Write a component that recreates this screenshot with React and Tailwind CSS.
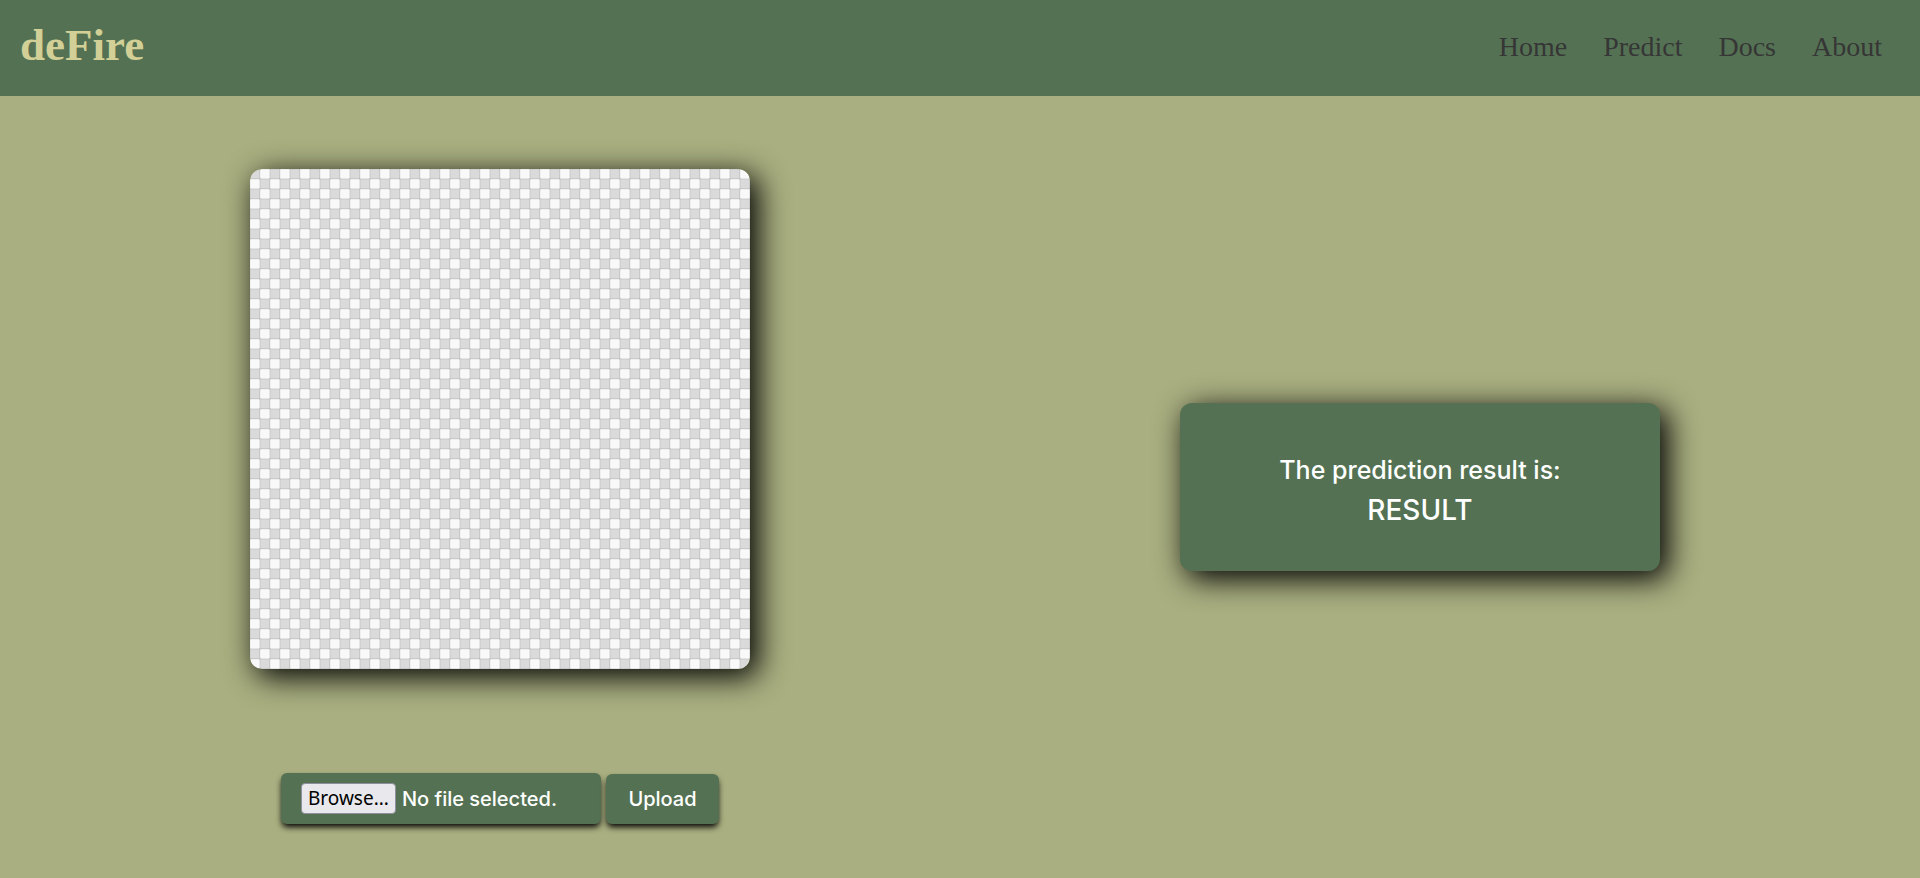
const links = ["Home", "Predict", "Docs", "About"];

function Checkerboard() {
  return (
    <svg
      role="img"
      aria-label="Image preview"
      viewBox="0 0 500 500"
      className="block aspect-square w-full max-w-[500px] rounded-[12px] shadow-[7px_7px_30px_1px_#000]"
    >
      <defs>
        <pattern id="checker" width="20" height="20" patternUnits="userSpaceOnUse">
          <rect width="20" height="20" fill="#dadada" />
          <rect x="10" width="10" height="10" rx="1" fill="#f9f9f9" />
          <rect y="10" width="10" height="10" rx="1" fill="#f9f9f9" />
          <path d="M0 9.5H20M0 19.5H20M9.5 0V20M19.5 0V20" stroke="#000" strokeOpacity="0.08" />
          <path d="M0 .5H20M0 10.5H20M.5 0V20M10.5 0V20" stroke="#000" strokeOpacity="0.04" />
        </pattern>
      </defs>
      <rect width="500" height="500" rx="12" fill="url(#checker)" />
    </svg>
  );
}

export default function App() {
  return (
    <div className="flex min-h-screen flex-col bg-[#a9af80] font-['Inter',sans-serif] font-medium text-white">
      <header className="flex h-24 items-center justify-between bg-[#547253] pr-[38px] pl-5 font-['Liberation_Serif',serif]">
        <a href="#home" className="pb-[6px] text-[45px] leading-[48px] font-bold text-[#d2d096]">
          deFire
        </a>
        <nav className="flex gap-9 pb-[3px] text-[28px] leading-9 font-normal text-[#363636]">
          {links.map((name) => (
            <a key={name} href={`#${name.toLowerCase()}`}>
              {name}
            </a>
          ))}
        </nav>
      </header>

      <main className="grid flex-1 grid-cols-2 px-10">
        <form className="flex flex-col items-center pt-[73px]" onSubmit={(e) => e.preventDefault()}>
          <Checkerboard />
          <div className="mt-26 flex items-end gap-[5px] text-[20px] leading-[30px]">
            <label
              htmlFor="image-file"
              className="flex w-80 items-center gap-[6px] rounded-[6px] bg-[#547253] px-5 pt-[10px] pb-[10px] shadow-[0_4px_6px_-1px_#000]"
            >
              <input id="image-file" type="file" accept="image/*" className="sr-only" />
              <span className="rounded-[4px] border border-[#8f8f9d] bg-[#e9e9ed] px-[6px] font-['Noto_Sans',sans-serif] text-[19px] leading-[29px] font-normal text-black">
                Browse...
              </span>
              <span>No file selected.</span>
            </label>
            <button
              type="submit"
              className="min-w-[113px] rounded-[6px] bg-[#547253] px-5 py-[10px] shadow-[0_4px_6px_-1px_#000]"
            >
              Upload
            </button>
          </div>
        </form>

        <section className="flex items-center justify-center">
          <div className="flex h-42 w-full max-w-[480px] flex-col items-center justify-center rounded-[12px] bg-[#547253] pt-[5px] shadow-[7px_7px_30px_1px_#000]">
            <p className="text-[25px] leading-10">The prediction result is:</p>
            <p className="text-[28px] leading-10">RESULT</p>
          </div>
        </section>
      </main>
    </div>
  );
}
